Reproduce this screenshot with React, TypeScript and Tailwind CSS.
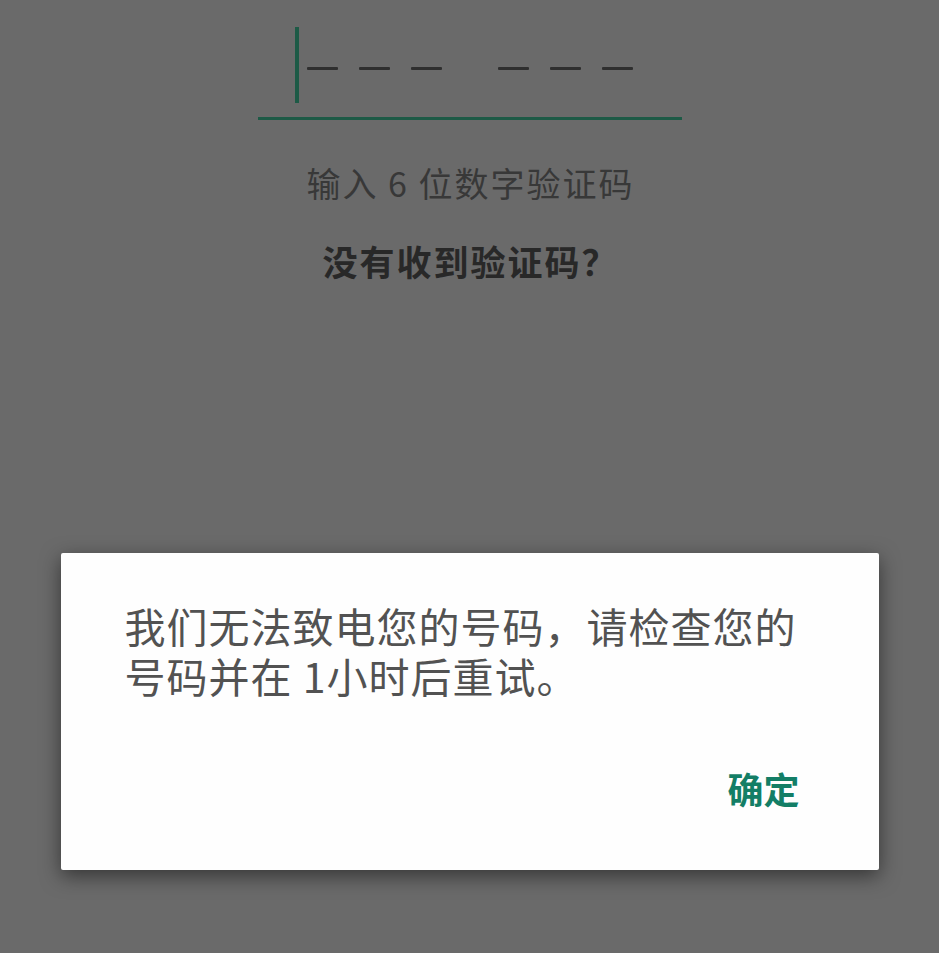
import React from "react";

const font = { fontFamily: '"Noto Sans CJK SC", "Noto Sans", sans-serif' };

function Dash() {
  return <div className="w-[31px] h-[3px] bg-[#2f2f2f] rounded-[1px]" />;
}

export default function App() {
  return (
    <div
      className="w-[939px] h-[953px] bg-[#6a6a6a] flex flex-col items-center overflow-hidden"
      style={font}
    >
      <div className="w-[424px] mt-[27px] flex flex-col">
        <div className="flex items-start pl-[37px] h-[76px]">
          <div className="w-[4px] h-[76px] bg-[#1d5a46]" />
          <div className="flex mt-[40px] ml-[8px] gap-[21px]">
            <Dash />
            <Dash />
            <Dash />
          </div>
          <div className="flex mt-[40px] ml-[56px] gap-[21px]">
            <Dash />
            <Dash />
            <Dash />
          </div>
        </div>
        <div className="mt-[14px] h-[3px] bg-[#1d5a46]" />
      </div>
      <div className="mt-[42px] text-[34px] leading-[42px] text-[#383838] tracking-[2px] pl-[2px]">
        输入 6 位数字验证码
      </div>
      <div className="mt-[34px] text-[35px] leading-[46px] font-bold text-[#282828] tracking-[2px] pl-[2px]">
        没有收到验证码？
      </div>

      <div className="mt-[269px] w-[818px] h-[317px] bg-[#fefefe] rounded-[2px] shadow-[0_6px_20px_rgba(0,0,0,0.5)] flex flex-col pl-[64px] pr-[79px] pt-[47px] pb-[60px]">
        <div className="text-[41px] text-[#525252] tracking-[1px]">
          <div className="h-[50px] leading-[50px]">我们无法致电您的号码，请检查您的</div>
          <div className="h-[50px] leading-[50px]">号码并在 1小时后重试。</div>
        </div>
        <div className="mt-auto flex justify-end">
          <span className="text-[36px] leading-[44px] font-bold text-[#137e66]">
            确定
          </span>
        </div>
      </div>
    </div>
  );
}
